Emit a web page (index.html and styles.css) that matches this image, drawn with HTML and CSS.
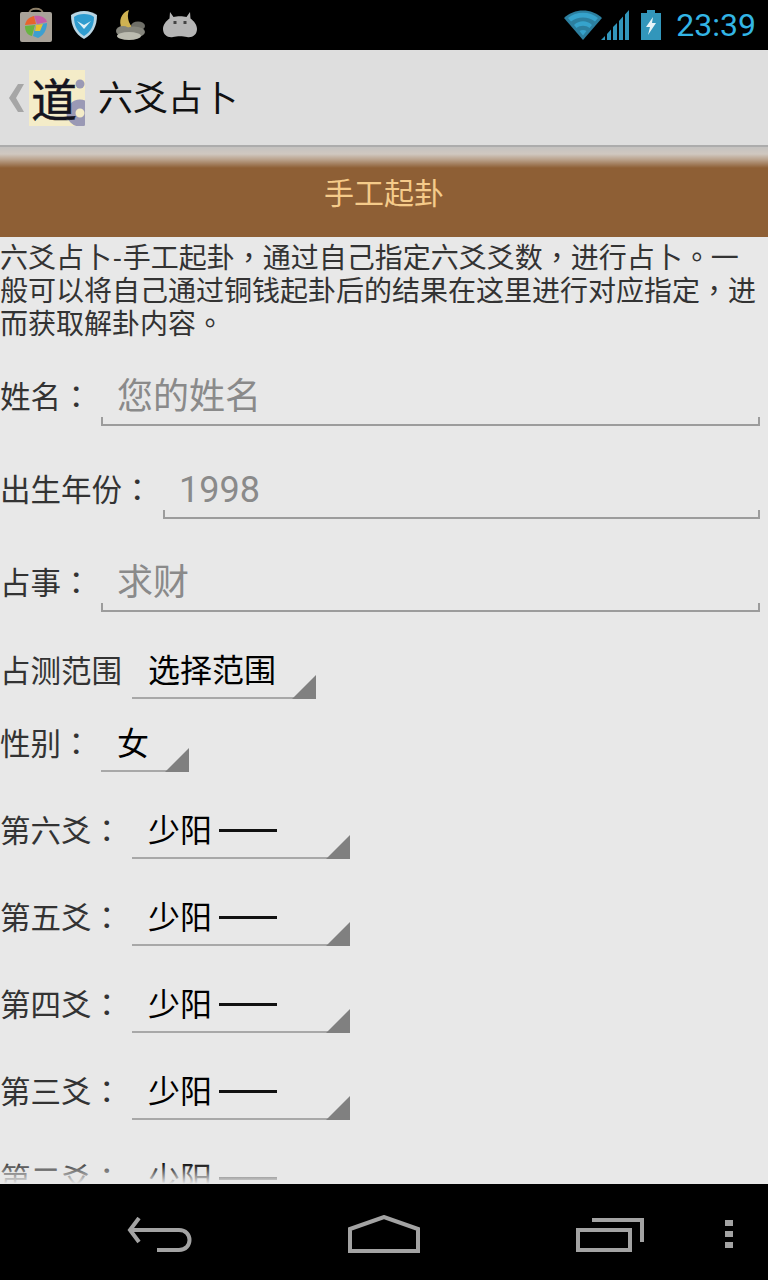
FILE: index.html
```html
<!DOCTYPE html>
<html lang="zh-CN">
  <head>
    <meta charset="utf-8" />
    <title>六爻占卜</title>
    <link rel="stylesheet" href="styles.css">
  </head>
  <body>
    <div class="screen">
      <!-- status bar -->
      <div class="status-bar">
        <div class="notify-icons">
          <svg class="ic-store" width="34" height="36" viewBox="0 0 34 36">
            <path d="M10 7 C10 0 24 0 24 7" fill="none" stroke="#8d7f68" stroke-width="2"/>
            <rect x="1" y="5" width="32" height="30" rx="2" fill="#a9a39a"/>
            <path d="M15 9 C22 8 27 11 28 15 L18 17Z" fill="#c65ca8"/>
            <path d="M6 18 C7 13 10 10 15 9 L17 17Z" fill="#e8642c"/>
            <path d="M6 19 L16 18 L13 29 C8 28 6 24 6 19Z" fill="#69b440"/>
            <path d="M17 18 L28 16 C28 23 24 29 19 31 L14 29Z" fill="#3d9fd0"/>
            <path d="M17 18 L24 17 L21 24 L16 24Z" fill="#e9c22f"/>
          </svg>
          <svg class="ic-shield" width="28" height="30" viewBox="0 0 28 30">
            <path d="M14 1 C19 1 24 3 27 5 C27 16 23 24 14 29 C5 24 1 16 1 5 C4 3 9 1 14 1Z" fill="#b9d6e4"/>
            <path d="M14 4 C18 4 22 5 24 7 C24 15 21 22 14 26 C7 22 4 15 4 7 C6 5 10 4 14 4Z" fill="#2f9ccf"/>
            <path d="M7 11 L14 19 L21 11 L14 15Z" fill="#dff0f7"/>
          </svg>
          <svg class="ic-moon" width="32" height="32" viewBox="0 0 32 32">
            <path d="M15 1 C7 4 4 12 8 20 L24 22 C15 18 12 9 15 1Z" fill="#cfb252"/>
            <ellipse cx="24" cy="17" rx="7" ry="4.500" fill="#6f6f68"/>
            <ellipse cx="9" cy="22" rx="7" ry="5" fill="#85857c"/>
            <ellipse cx="20" cy="23" rx="11" ry="5.500" fill="#85857c"/>
            <ellipse cx="15" cy="27" rx="12" ry="4" fill="#bcbcb0"/>
          </svg>
          <svg class="ic-droid" width="34" height="28" viewBox="0 0 34 28">
            <path d="M7 1 L10.500 6 C14 5 20 5 23.500 6 L27 1 L27.500 7.500 C31 10 34 14 34 18 C34 24 29 27 24 26 C20 25 14 25 10 26 C5 27 0 24 0 18 C0 14 3 10 6.500 7.500Z" fill="#b5b5b5"/>
            <rect x="10.500" y="10" width="3" height="3" fill="#444"/>
            <rect x="20.500" y="10" width="3" height="3" fill="#444"/>
          </svg>
        </div>
        <div class="system-icons">
          <svg class="ic-wifi" width="38" height="30" viewBox="0 0 38 30">
            <path d="M0 8 C10 -2 28 -2 38 8 L19 30Z" fill="#2c7f9f"/>
            <path d="M4 8 C12 1 26 1 34 8 L31 11.500 C24 6 14 6 7 11.500Z M10 15 C15 10 23 10 28 15 L25.500 18 C22 15 16 15 12.500 18Z M15.500 21 C17.500 19.500 20.500 19.500 22.500 21 L19 25.500Z" fill="#36a3cc"/>
          </svg>
          <svg class="ic-signal" width="28" height="30" viewBox="0 0 28 30">
            <path d="M0 30 L4 26 V30Z M6 30 V24 L10 19.500 V30Z M12 30 V17 L16 13 V30Z M18 30 V11 L22 6.500 V30Z M24 30 V4.500 L28 0 V30Z" fill="#3296bb"/>
          </svg>
          <svg class="ic-battery" width="20" height="30" viewBox="0 0 20 30">
            <path d="M6 0 H14 V3 H20 V30 H0 V3 H6Z" fill="#3296bb"/>
            <path d="M12 7 L5 17 H9 L7 25 L15 13 H11Z" fill="#e8f4f8"/>
          </svg>
          <span class="clock">23:39</span>
        </div>
      </div>

      <!-- action bar -->
      <div class="action-bar">
        <svg class="ic-up" width="16" height="30" viewBox="0 0 16 30">
          <path d="M10 1 H16 L8 15 L16 29 H10 L1 15Z" fill="#a6a6a6"/>
        </svg>
        <svg class="app-logo" width="56" height="56" viewBox="0 0 56 56">
          <rect width="56" height="56" fill="#f4ecc8"/>
          <circle cx="51" cy="14" r="4.500" fill="#9a99b5"/>
          <circle cx="51" cy="43" r="9" fill="none" stroke="#9a99b5" stroke-width="9"/>
          <text class="logo-dao" x="2" y="47">道</text>
        </svg>
        <span class="app-title">六爻占卜</span>
      </div>

      <div class="banner"><span class="banner-text">手工起卦</span></div>

      <div class="content">
        <p class="intro">六爻占卜<span class="dash">-</span>手工起卦<span class="punct" lang="zh-TW">，</span>通过自己指定六爻爻数<span class="punct" lang="zh-TW">，</span>进行占卜<span class="punct" lang="zh-TW">。</span>一般可以将自己通过铜钱起卦后的结果在这里进行对应指定<span class="punct" lang="zh-TW">，</span>进而获取解卦内容<span class="punct" lang="zh-TW">。</span></p>

        <div class="input-row first">
          <span class="label">姓名<span class="punct" lang="zh-TW">：</span></span>
          <div class="field">您的姓名</div>
        </div>
        <div class="input-row year-row">
          <span class="label">出生年份<span class="punct" lang="zh-TW">：</span></span>
          <div class="field">1998</div>
        </div>
        <div class="input-row">
          <span class="label">占事<span class="punct" lang="zh-TW">：</span></span>
          <div class="field">求财</div>
        </div>

        <div class="spinner-row range-row">
          <span class="label">占测范围</span>
          <div class="spinner range-spinner">选择范围</div>
        </div>
        <div class="spinner-row sex-row">
          <span class="label">性别<span class="punct" lang="zh-TW">：</span></span>
          <div class="spinner sex-spinner">女</div>
        </div>
        <div class="spinner-row yao-row">
          <span class="label">第六爻<span class="punct" lang="zh-TW">：</span></span>
          <div class="spinner yao-spinner">少阳 <span class="yao-bar"></span></div>
        </div>
        <div class="spinner-row yao-row">
          <span class="label">第五爻<span class="punct" lang="zh-TW">：</span></span>
          <div class="spinner yao-spinner">少阳 <span class="yao-bar"></span></div>
        </div>
        <div class="spinner-row yao-row">
          <span class="label">第四爻<span class="punct" lang="zh-TW">：</span></span>
          <div class="spinner yao-spinner">少阳 <span class="yao-bar"></span></div>
        </div>
        <div class="spinner-row yao-row">
          <span class="label">第三爻<span class="punct" lang="zh-TW">：</span></span>
          <div class="spinner yao-spinner">少阳 <span class="yao-bar"></span></div>
        </div>
        <div class="spinner-row yao-row">
          <span class="label">第二爻<span class="punct" lang="zh-TW">：</span></span>
          <div class="spinner yao-spinner">少阳 <span class="yao-bar"></span></div>
        </div>
        <div class="content-fade"></div>
      </div>

      <!-- nav bar -->
      <div class="nav-bar">
        <svg class="nav-back" width="66" height="36" viewBox="0 0 66 36">
          <path d="M12 1 L3 13 L12 25 M3 13 H52 C66 13 66 33 52 33 H30" fill="none" stroke="#a3a3a3" stroke-width="4"/>
        </svg>
        <svg class="nav-home" width="72" height="38" viewBox="0 0 72 38">
          <path d="M2 36 V14 L36 2 L70 14 V36Z" fill="none" stroke="#a3a3a3" stroke-width="4"/>
        </svg>
        <svg class="nav-recent" width="68" height="34" viewBox="0 0 68 34">
          <path d="M16 2 H66 V24" fill="none" stroke="#a3a3a3" stroke-width="4"/>
          <rect x="2" y="12" width="52" height="20" fill="none" stroke="#a3a3a3" stroke-width="4"/>
        </svg>
        <div class="nav-menu">
          <span></span><span></span><span></span>
        </div>
      </div>
    </div>
  </body>
</html>
```

FILE: styles.css
```css
body {
  margin: 0;
  font-family: "Roboto", "Noto Sans CJK SC", sans-serif;
}
.screen {
  width: 768px;
  height: 1280px;
  display: flex;
  flex-direction: column;
  overflow: hidden;
  background: #e8e8e8;
}
/* Status bar */
.status-bar {
  height: 50px;
  flex: none;
  background: #000;
  display: flex;
  justify-content: space-between;
  align-items: center;
}
.notify-icons {
  display: flex;
  align-items: center;
  padding-left: 19px;
}
.ic-shield {
  margin-left: 17px;
}
.ic-moon {
  margin-left: 16px;
}
.ic-droid {
  margin-left: 17px;
}
.system-icons {
  display: flex;
  align-items: center;
  padding-right: 12px;
}
.ic-signal {
  margin-left: -1px;
}
.ic-battery {
  margin-left: 12px;
}
.clock {
  margin-left: 15px;
  font-size: 32px;
  color: #33b5e5;
}
/* Action bar */
.action-bar {
  height: 95px;
  flex: none;
  background: #dedede;
  border-bottom: 2px solid #acacac;
  display: flex;
  align-items: center;
  padding-left: 8px;
}
.app-logo {
  flex: none;
  margin-left: 5px;
}
.logo-dao {
  font-size: 46px;
  fill: #14141f;
  stroke: #14141f;
  stroke-width: 0.5;
}
.app-title {
  margin-left: 13px;
  margin-bottom: 4px;
  font-size: 35px;
  color: #111;
}
/* Brown banner under the action bar */
.banner {
  height: 90px;
  flex: none;
  background: linear-gradient(#c4c2c0 0, #d0c8c0 7px, #b89f88 13px, #8e5f35 21px);
  color: #f5cb8a;
  font-size: 30px;
  display: flex;
  align-items: center;
  justify-content: center;
}
.banner-text {
  margin-bottom: 2px;
}
/* Scrolling form */
.content {
  flex: 1;
  position: relative;
  overflow: hidden;
}
.content-fade {
  position: absolute;
  left: 0;
  right: 0;
  bottom: 0;
  height: 22px;
  background: linear-gradient(rgba(232, 232, 232, 0), #e8e8e8);
}
.intro {
  margin: 0;
  padding: 5px 8px 0 0;
  font-size: 28px;
  line-height: 33px;
  height: 98px;
  color: #333;
}
.dash {
  margin: 0 1.5px;
}
.punct {
  font-family: "Noto Sans CJK TC", sans-serif;
  line-height: 0;
}
.label {
  font-size: 30.5px;
  color: #333;
  white-space: nowrap;
}
.input-row {
  height: 93px;
  display: flex;
  align-items: center;
}
.input-row.first {
  margin-top: 8px;
}
.year-row .label {
  padding-right: 1px;
}
.field {
  position: relative;
  flex: 1;
  height: 60px;
  margin: 3px 8px 0 9.5px;
  padding-left: 16px;
  border-bottom: 2px solid #9c9c9c;
  font-size: 36px;
  line-height: 63px;
  color: #8a8a8a;
  box-sizing: border-box;
}
.field::before,
.field::after {
  content: "";
  position: absolute;
  bottom: 0;
  width: 2px;
  height: 7px;
  background: #9c9c9c;
}
.field::before {
  left: 0;
}
.field::after {
  right: 0;
}
.spinner-row {
  height: 72px;
  display: flex;
  align-items: center;
}
.spinner-row .label {
  padding-bottom: 6px;
}
.range-row {
  margin-top: 9px;
}
.sex-row {
  margin-top: 1px;
}
.yao-row {
  margin-top: 15px;
}
.spinner {
  position: relative;
  height: 54px;
  margin-left: 10px;
  box-sizing: border-box;
  border-bottom: 2px solid #a8a8a8;
  padding-left: 16px;
  font-size: 32px;
  line-height: 52px;
  color: #000;
  white-space: nowrap;
}
.spinner::after {
  content: "";
  position: absolute;
  right: 0;
  bottom: -2px;
  width: 24px;
  height: 24px;
  background: #808080;
  clip-path: polygon(100% 0, 100% 100%, 0 100%);
}
.range-spinner {
  width: 184px;
}
.sex-spinner {
  width: 88px;
  margin-left: 9.5px;
}
.yao-spinner {
  width: 218px;
}
.yao-bar {
  display: inline-block;
  width: 58px;
  height: 3px;
  margin-left: -1px;
  background: #111;
  vertical-align: 10px;
}
/* Nav bar */
.nav-bar {
  height: 96px;
  flex: none;
  background: #000;
  display: flex;
  align-items: center;
}
.nav-back {
  margin-left: 127px;
  margin-top: 6px;
}
.nav-home {
  margin-left: 155px;
  margin-top: 3px;
}
.nav-recent {
  margin-left: 156px;
  margin-top: 6px;
}
.nav-menu {
  margin-left: 81px;
  display: flex;
  flex-direction: column;
  gap: 5px;
  margin-top: 4px;
}
.nav-menu span {
  display: block;
  width: 8px;
  height: 6px;
  background: #a3a3a3;
}
```
